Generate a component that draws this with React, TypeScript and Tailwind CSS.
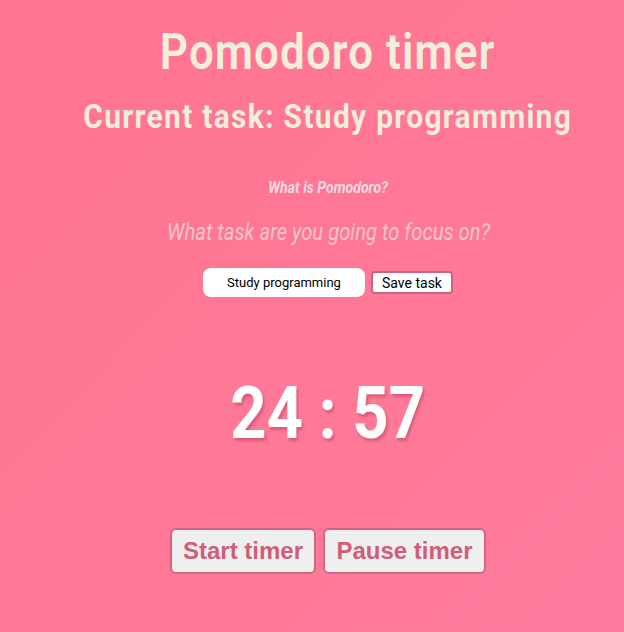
import { useState } from 'react';

const condensed = "font-['Roboto',sans-serif]";

export default function App() {
  const [task, setTask] = useState('Study programming');
  const [current, setCurrent] = useState('Study programming');

  return (
    <div className="min-h-[632px] w-full bg-gradient-to-br from-[#ff7490] to-[#ff7c9e] pl-8 text-center">
      <div className="flex flex-col items-center pt-[22px]">
        {/* Heading */}
        <h1 className={`${condensed} text-[50px] font-semibold leading-[60px] tracking-[1.2px] text-[#f3edd9]`}>
          <span className="inline-block scale-x-[0.88]">Pomodoro timer</span>
        </h1>
        <h2 className={`${condensed} mt-[14px] text-[34px] font-bold leading-[40px] tracking-[1.5px] text-[#f3edd9]`}>
          <span className="inline-block scale-x-[0.88]">Current task: {current}</span>
        </h2>

        {/* Task form */}
        <p className={`${condensed} mt-[42px] text-[16px] font-bold italic leading-[20px] text-[#efdbe0]`}>
          <span className="inline-block scale-x-[0.88]">What is Pomodoro?</span>
        </p>
        <p className={`${condensed} mt-[20px] text-[23px] italic leading-[30px] text-[#f7c4cf]`}>
          <span className="inline-block scale-x-[0.88]">What task are you going to focus on?</span>
        </p>
        <div className="mt-[20px] flex items-center gap-[6px]">
          <input
            value={task}
            onChange={(e) => setTask(e.target.value)}
            className={`${condensed} h-[29px] w-[162px] rounded-[8px] bg-white text-center text-[13px] text-black outline-none`}
          />
          <button
            onClick={() => setCurrent(task)}
            className={`${condensed} h-[23px] w-[82px] rounded-[4px] border-2 border-[#c8667d] bg-white text-[14px] leading-[18px] text-black`}
          >
            Save task
          </button>
        </div>

        {/* Timer */}
        <div
          className={`${condensed} mt-[75px] text-[72px] font-bold leading-[84px] text-white [text-shadow:2px_3px_3px_rgba(170,60,80,0.45)]`}
        >
          <span className="inline-block scale-x-[0.88]">24 : 57</span>
        </div>

        {/* Controls */}
        <div className="mt-[72px] flex gap-[7px]">
          <button className="h-[46px] w-[146px] rounded-[6px] border-2 border-[#d0677e] bg-[#efefef] font-['Liberation_Sans',Arial,sans-serif] text-[24px] font-bold text-[#d25d76]">
            Start timer
          </button>
          <button className="h-[46px] w-[163px] rounded-[6px] border-2 border-[#d0677e] bg-[#efefef] font-['Liberation_Sans',Arial,sans-serif] text-[24px] font-bold text-[#d25d76]">
            Pause timer
          </button>
        </div>
      </div>
    </div>
  );
}
